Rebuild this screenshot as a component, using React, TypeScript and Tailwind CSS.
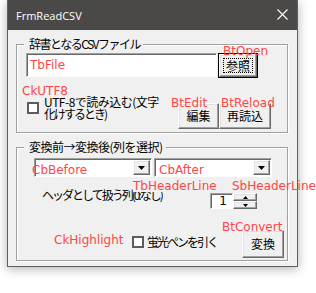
import React from "react";

const jp = "font-['Noto_Sans_CJK_JP',sans-serif] text-[12px] leading-[12px] text-black";
const red = "absolute font-['DejaVu_Sans',sans-serif] text-[12px] leading-[12px] text-[#ff4545] whitespace-nowrap";
const raised =
  "bg-[#f0f0f0] border border-t-white border-l-white border-r-[#696969] border-b-[#696969] shadow-[inset_-1px_-1px_0_#a0a0a0,inset_1px_1px_0_#e3e3e3]";
const sunken =
  "bg-white border border-t-[#a0a0a0] border-l-[#a0a0a0] border-r-white border-b-white shadow-[inset_1px_1px_0_#696969]";

function DownTri() {
  return (
    <svg width="7" height="4" viewBox="0 0 7 4">
      <polygon points="0,0 7,0 3.5,4" fill="black" />
    </svg>
  );
}

function Combo() {
  return (
    <div className={`${sunken} w-[118px] h-[19px] flex justify-end p-[1px]`}>
      <div className={`${raised} w-[17px] h-full flex items-center justify-center`}>
        <DownTri />
      </div>
    </div>
  );
}

function Check() {
  return <div className="w-[12px] h-[12px] border-2 border-[#5c5c5c] bg-white shrink-0" />;
}

export default function App() {
  return (
    <div className="relative w-[316px] h-[293px] bg-white overflow-hidden">
      <div className="ml-[7px] w-[291px] h-[267px] flex flex-col border-x border-b border-[#5f5f5f] bg-[#f0f0f0] shadow-[0_2px_10px_rgba(0,0,0,0.3)]">
        <div className="h-[30px] shrink-0 bg-[#4b4947] flex items-center justify-between pl-[8px] pr-[9px]">
          <span className="text-white text-[11px] leading-[14px] font-['Open_Sans',sans-serif] mt-[1px]">FrmReadCSV</span>
          <svg width="11" height="11" viewBox="0 0 11 11" className="-mt-[1px]">
            <path d="M0.5 0.5L10.5 10.5M10.5 0.5L0.5 10.5" stroke="white" strokeWidth="1.1" />
          </svg>
        </div>
        <div className="flex-1 flex flex-col pl-[8px]">
          {/* Group 1 */}
          <div className="relative mt-[14px] w-[272px] h-[89px] border border-[#a0a0a0] shadow-[1px_1px_0_white,inset_1px_1px_0_white] flex flex-col pl-[9px]">
            <span className={`absolute left-[7px] -top-[7px] bg-[#f0f0f0] pl-[5px] pr-[3px] ${jp} tracking-[-1.5px]`}>
              辞書となるCSVファイル
            </span>
            <div className="mt-[8px] flex gap-[1px]">
              <div className={`${sunken} w-[191px] h-[24px]`} />
              <div className="w-[40px] h-[25px] border border-black">
                <div className={`${raised} w-full h-full flex items-center justify-center p-[3px]`}>
                  <div className={`w-full h-full border border-dotted border-black flex items-center justify-center ${jp}`}>
                    参照
                  </div>
                </div>
              </div>
            </div>
            <div className="mt-[18px] flex items-start">
              <div className="ml-[1px] mt-[6px]">
                <Check />
              </div>
              <div className={`ml-[5px] w-[134px] ${jp} tracking-[-0.5px]`}>
                UTF-8で読み込む(文字
                <br />
                <span className="tracking-[-2px]">化けするとき)</span>
              </div>
              <div className="mt-[7px] flex">
                <div className={`${raised} w-[41px] h-[26px] flex items-center justify-center ${jp}`}>編集</div>
                <div className={`${raised} w-[52px] h-[26px] flex items-center justify-center ${jp}`}>再読込</div>
              </div>
            </div>
          </div>

          {/* Group 2 */}
          <div className="relative mt-[14px] w-[272px] h-[114px] border border-[#a0a0a0] shadow-[1px_1px_0_white,inset_1px_1px_0_white] flex flex-col pl-[17px]">
            <span className={`absolute left-[7px] -top-[7px] bg-[#f0f0f0] pl-[5px] pr-[3px] ${jp} tracking-[-0.5px]`}>
              変換前→変換後(列を選択)
            </span>
            <div className="mt-[10px] flex gap-[2px]">
              <Combo />
              <Combo />
            </div>
            <div className="mt-[12px] flex items-start">
              <div className={`ml-[8px] w-[168px] h-[12px] ${jp} tracking-[-2px] whitespace-nowrap`}>
                ヘッダとして扱う列(0:なし)
              </div>
              <div className={`${sunken} mt-[4px] w-[23px] h-[16px] flex items-center justify-end pr-[5px] font-['DejaVu_Sans',sans-serif] text-[12px] leading-[12px]`}>
                1
              </div>
              <div className="mt-[4px] w-[24px] h-[16px] flex flex-col">
                <div className={`${raised} h-[8px] flex items-center justify-center`}>
                  <svg width="5" height="3" viewBox="0 0 5 3">
                    <polygon points="0,3 5,3 2.5,0" fill="black" />
                  </svg>
                </div>
                <div className={`${raised} h-[8px] flex items-center justify-center`}>
                  <svg width="5" height="3" viewBox="0 0 5 3">
                    <polygon points="0,0 5,0 2.5,3" fill="black" />
                  </svg>
                </div>
              </div>
            </div>
            <div className="mt-[21px] flex items-start">
              <div className="ml-[98px] mt-[6px]">
                <Check />
              </div>
              <div className={`ml-[3px] mt-[6px] ${jp} tracking-[-2px] whitespace-nowrap`}>蛍光ペンを引く</div>
              <div className={`${raised} ml-auto mr-[3px] w-[42px] h-[28px] flex items-center justify-center ${jp}`}>
                変換
              </div>
            </div>
          </div>
        </div>
      </div>

      {/* overlay control-name labels */}
      <span className={`${red} left-[223px] top-[45px]`}>BtOpen</span>
      <span className={`${red} left-[30px] top-[59px]`}>TbFile</span>
      <span className={`${red} left-[22px] top-[85px]`}>CkUTF8</span>
      <span className={`${red} left-[171px] top-[97px]`}>BtEdit</span>
      <span className={`${red} left-[221px] top-[97px]`}>BtReload</span>
      <span className={`${red} left-[32px] top-[164px]`}>CbBefore</span>
      <span className={`${red} left-[159px] top-[164px]`}>CbAfter</span>
      <span className={`${red} left-[133px] top-[180px] bg-[#f0f0f0] leading-[11px]`}>TbHeaderLine</span>
      <span className={`${red} left-[232px] top-[180px] leading-[11px]`}>SbHeaderLine</span>
      <span className={`${red} left-[54px] top-[234px]`}>CkHighlight</span>
      <span className={`${red} left-[222px] top-[221px]`}>BtConvert</span>
    </div>
  );
}
